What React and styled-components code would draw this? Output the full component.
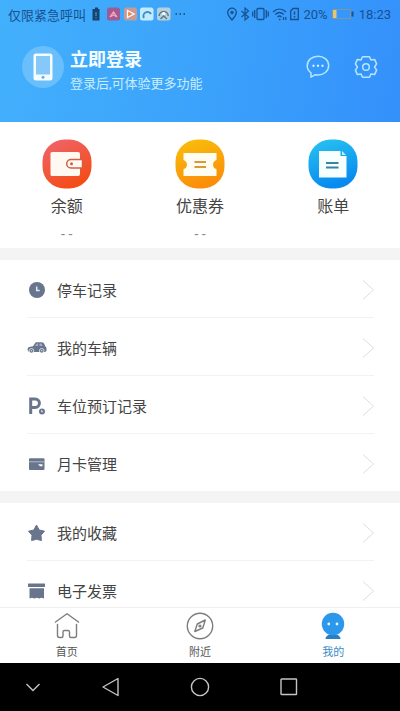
import { useState } from "react";
import styled, { createGlobalStyle } from "styled-components";

const records = [
    { id: "parking", title: "停车记录", icon: <ClockIcon /> },
    { id: "cars", title: "我的车辆", icon: <CarIcon /> },
    { id: "booking", title: "车位预订记录", icon: <ParkingIcon /> },
    { id: "card", title: "月卡管理", icon: <CardIcon /> }
];

const extras = [
    { id: "favorites", title: "我的收藏", icon: <StarIcon /> },
    { id: "invoice", title: "电子发票", icon: <InvoiceIcon /> }
];

const shortcuts = [
    { id: "balance", title: "余额", value: "- -", icon: <WalletIcon /> },
    { id: "coupon", title: "优惠券", value: "- -", icon: <CouponIcon /> },
    { id: "bill", title: "账单", value: "", icon: <BillIcon /> }
];

const tabs = [
    { id: "home", title: "首页", icon: <HomeIcon /> },
    { id: "nearby", title: "附近", icon: <CompassIcon /> },
    { id: "mine", title: "我的", icon: <MineIcon /> }
];

export default function App() {
    const [activeTab, setActiveTab] = useState("mine");

    return (
        <>
            <GlobalStyle />
            <Screen>
                <Header>
                    <StatusBar>
                        <StatusGroup $gap={5}>
                            仅限紧急呼叫
                            <StatusIconsLeft />
                        </StatusGroup>
                        <StatusGroup $gap={3}>
                            <StatusIconsRight />
                            20%
                            <BatteryIcon />
                            18:23
                        </StatusGroup>
                    </StatusBar>
                    <Profile>
                        <Login type="button">
                            <Avatar><PhoneIcon /></Avatar>
                            <LoginText>
                                <LoginTitle>立即登录</LoginTitle>
                                <LoginHint>登录后,可体验更多功能</LoginHint>
                            </LoginText>
                        </Login>
                        <Actions>
                            <IconButton type="button" aria-label="消息"><MessageIcon /></IconButton>
                            <IconButton type="button" aria-label="设置"><SettingsIcon /></IconButton>
                        </Actions>
                    </Profile>
                </Header>

                <Content>
                    <Shortcuts>
                        {shortcuts.map(({ id, title, value, icon }) => (
                            <Shortcut key={id} type="button">
                                {icon}
                                <ShortcutTitle>{title}</ShortcutTitle>
                                <ShortcutValue>{value}</ShortcutValue>
                            </Shortcut>
                        ))}
                    </Shortcuts>
                    <Menu items={records} />
                    <Menu items={extras} />
                </Content>

                <TabBar>
                    {tabs.map(({ id, title, icon }) => (
                        <Tab
                            key={id}
                            type="button"
                            $active={id === activeTab}
                            onClick={() => setActiveTab(id)}
                        >
                            {icon}
                            {title}
                        </Tab>
                    ))}
                </TabBar>

                <SystemBar>
                    <SystemButton type="button" aria-label="收起">
                        <svg width="24" height="24" fill="none" stroke="#c4c4c4" strokeWidth="1.4">
                            <path d="M5.5 9l6.5 6.500L18.500 9" />
                        </svg>
                    </SystemButton>
                    <SystemButton type="button" aria-label="返回">
                        <svg width="24" height="24" fill="none" stroke="#c4c4c4" strokeWidth="1.4" strokeLinejoin="round">
                            <path d="M19 3.500v17L4 12z" />
                        </svg>
                    </SystemButton>
                    <SystemButton type="button" aria-label="主屏幕">
                        <svg width="24" height="24" fill="none" stroke="#c4c4c4" strokeWidth="1.4">
                            <circle cx="12" cy="12" r="8.600" />
                        </svg>
                    </SystemButton>
                    <SystemButton type="button" aria-label="最近任务">
                        <svg width="24" height="24" fill="none" stroke="#c4c4c4" strokeWidth="1.4">
                            <rect x="4" y="4" width="15.500" height="15.500" rx=".6" />
                        </svg>
                    </SystemButton>
                    <span />
                </SystemBar>
            </Screen>
        </>
    );
}

function Menu({ items }) {
    return (
        <MenuList>
            {items.map(({ id, title, icon }) => (
                <MenuItem key={id}>
                    <MenuButton type="button">
                        {icon}
                        <MenuTitle>{title}</MenuTitle>
                        <svg width="12" height="22" fill="none" stroke="#dedede">
                            <path d="M1 1.500l10.500 9.500L1 20.500" />
                        </svg>
                    </MenuButton>
                </MenuItem>
            ))}
        </MenuList>
    );
}

function StatusIconsLeft() {
    return (
        <svg width="98" height="16" viewBox="0 0 98 16">
            <path d="M4 1.500h3V3h1.500v11.500h-7V3H4z" fill="#17446f" />
            <path d="M5 6v4M5 11.200v1.200" stroke="#4da6e8" />
            <rect x="16" y="1.500" width="13" height="13" rx="2.500" fill="#a05b93" />
            <path d="M19 11l3.500-5 3.500 5-3.500-2z" fill="none" stroke="#f3a5bd" strokeWidth="1.300" />
            <rect x="33" y="1.500" width="13" height="13" rx="2.500" fill="#c79a96" />
            <path d="M36.500 4.500l6.500 3.500-6.500 3.500z" fill="#e5864f" stroke="#fff" strokeWidth="1.300" />
            <rect x="49" y="1.500" width="13.500" height="13" rx="2.500" fill="#c3ebff" />
            <path d="M53 12a4 4 0 1 1 7-4" fill="none" stroke="#368fc4" strokeWidth="2" />
            <rect x="66" y="1.500" width="13.500" height="13" rx="2.500" fill="#b8cfdc" />
            <path d="M68.200 10a4.500 4.500 0 1 1 9 0M69.500 13l3.200-3 3.200 3" fill="none" stroke="#587b91" strokeWidth="1.500" />
            <circle cx="72.700" cy="7.500" r="1.500" fill="#fff" />
            <path d="M84.500 8H86M88.500 8H90M92.500 8H94" stroke="#17446f" strokeWidth="1.500" />
        </svg>
    );
}

function StatusIconsRight() {
    return (
        <svg width="74" height="16" viewBox="0 0 74 16" fill="none" stroke="#17518f" strokeWidth="1.300">
            <path d="M6 14C3.500 11 1.700 9 1.700 6.500a4.300 4.300 0 0 1 8.600 0C10.300 9 8.500 11 6 14z" />
            <circle cx="6" cy="6.500" r="1.100" />
            <path d="M15.500 5l7 6-3.500 3V2l3.500 3-7 6" strokeWidth="1.200" />
            <rect x="31" y="2.500" width="7" height="11" rx="1" />
            <path d="M28.700 4v8M26.700 5.500v5M40.300 4v8M42.300 5.500v5" />
            <path d="M47 6c4-3.800 9-3.800 13 0M49.300 8.500c2.600-2.500 5.800-2.500 8.400 0M51.500 11c1.200-1.200 2.800-1.200 4 0" />
            <path d="M53 13.500h1.500M57.500 11v3M59.800 11v3" />
            <path d="M64.700 5L67 2.500h5.300v11h-7.600z" />
            <path d="M68.500 5.500v3.200M68.500 10v1.500" strokeWidth="1.500" />
        </svg>
    );
}

function BatteryIcon() {
    return (
        <svg width="25" height="16" viewBox="0 0 25 16">
            <rect x="1.500" y="3.500" width="18" height="9" rx="1" fill="none" stroke="#7d97a0" strokeWidth="1.200" />
            <rect x="2" y="4" width="3.500" height="8" fill="#e8c571" />
            <rect x="20.500" y="5.500" width="2" height="5" fill="#17518f" />
        </svg>
    );
}

function PhoneIcon() {
    return (
        <svg width="20" height="28" viewBox="0 0 20 28">
            <rect x=".5" y=".5" width="19" height="27" rx="2.500" fill="#f4fcff" />
            <rect x="3" y="3" width="14" height="18.500" fill="#86c8f8" />
            <circle cx="10" cy="24.300" r="1.500" fill="#6caede" />
        </svg>
    );
}

function MessageIcon() {
    return (
        <svg width="24" height="24" viewBox="0 0 24 24" fill="none" stroke="#b5e6ff" strokeWidth="1.500">
            <path d="M5 17.800C2.500 16 1.200 13.500 1.200 10.700 1.200 5.200 6 1.200 12 1.200s10.700 4 10.700 9.300-4.700 9.500-10.700 9.500c-1 0-1.800-.1-2.600-.3L5 22.200z" strokeLinejoin="round" />
            <path d="M6.500 10.700h2M11 10.700h2M15.500 10.700h2" stroke="#e3f7ff" strokeWidth="2" />
        </svg>
    );
}

function SettingsIcon() {
    return (
        <svg width="24" height="24" viewBox="0 0 24 24" fill="none" stroke="#b5e6ff" strokeWidth="1.500" strokeLinejoin="round">
            <path d="M8.500 1.700h7l1.400 3.200 3.700-.5 2 4.500-2 3.100 2 3.100-2 4.500-3.700-.5-1.400 3.200h-7l-1.400-3.200-3.700.5-2-4.500 2-3.100-2-3.100 2-4.500 3.700.5z" />
            <circle cx="12" cy="12" r="3.300" />
        </svg>
    );
}

function WalletIcon() {
    return (
        <svg width="50" height="50" viewBox="0 0 50 50">
            <defs>
                <linearGradient id="wallet" x2=".5" y2="1">
                    <stop offset="0" stopColor="#ef6570" />
                    <stop offset="1" stopColor="#f44d18" />
                </linearGradient>
            </defs>
            <rect x=".5" y=".5" width="49" height="49" rx="22" fill="url(#wallet)" />
            <path d="M10 13h26q2 0 2 2v20q0 2-2 2H10q-1.500 0-1.500-1.500v-21Q8.500 13 10 13z" fill="#fff9f1" />
            <path d="M40.500 20.500H29a4.300 4.300 0 0 0 0 8.600h11.500z" fill="#fff9f1" stroke="#cf604a" strokeWidth="1.500" />
            <circle cx="29.500" cy="24.800" r="1.500" fill="#dc5643" />
        </svg>
    );
}

function CouponIcon() {
    return (
        <svg width="50" height="50" viewBox="0 0 50 50">
            <defs>
                <linearGradient id="coupon" x2=".3" y2="1">
                    <stop offset="0" stopColor="#f9c00a" />
                    <stop offset="1" stopColor="#fb8f0a" />
                </linearGradient>
            </defs>
            <rect x=".5" y=".5" width="49" height="49" rx="22" fill="url(#coupon)" />
            <path d="M8.500 14h33v7a4.800 4.800 0 0 0 0 9.200V37h-33v-6.800a4.800 4.800 0 0 0 0-9.200z" fill="#fffdf2" />
            <path d="M19.500 23h11.500M19.500 28h11.500" stroke="#d79a35" strokeWidth="1.800" />
        </svg>
    );
}

function BillIcon() {
    return (
        <svg width="50" height="50" viewBox="0 0 50 50">
            <defs>
                <linearGradient id="bill" x2=".3" y2="1">
                    <stop offset="0" stopColor="#29c4f1" />
                    <stop offset="1" stopColor="#078bef" />
                </linearGradient>
            </defs>
            <rect x=".5" y=".5" width="49" height="49" rx="22" fill="url(#bill)" />
            <path d="M11 12h21.500v5h6v21.500H11z" fill="#f7ffff" />
            <path d="M34 12l4 4h-4z" fill="#c3f0ff" />
            <path d="M18 24h12.500M18 28.500h12.500" stroke="#35869f" strokeWidth="2" />
        </svg>
    );
}

function ClockIcon() {
    return (
        <svg width="20" height="20" viewBox="0 0 20 20">
            <circle cx="10" cy="10" r="8" fill="#68758c" />
            <path d="M9.700 6.500v4h3" fill="none" stroke="#dfeaf8" strokeWidth="1.500" />
        </svg>
    );
}

function CarIcon() {
    return (
        <svg width="20" height="20" viewBox="0 0 20 20">
            <path d="M.5 12q0-2.500 1.500-3l4-.8 2-3Q8.500 4.200 9.500 4.200h5.500q1.500 0 2.200 1.500l1 2.500q1.300.8 1.300 2.500v2.300L18 14H2z" fill="#68758c" />
            <path d="M8 8l1.800-2.500H11V8zM12.500 5.500h2L15.700 8h-3.200z" fill="#a3adbd" />
            <circle cx="4.500" cy="12.800" r="2.300" fill="#68758c" stroke="#fff" strokeWidth=".7" />
            <circle cx="14.700" cy="12.800" r="2.300" fill="#68758c" stroke="#fff" strokeWidth=".7" />
            <circle cx="4.500" cy="12.800" r=".8" fill="#d5dae2" />
            <circle cx="14.700" cy="12.800" r=".8" fill="#d5dae2" />
        </svg>
    );
}

function ParkingIcon() {
    return (
        <svg width="20" height="20" viewBox="0 0 20 20" fill="none" stroke="#68758c">
            <path d="M3.700 18V3h4.500a4.200 4.200 0 0 1 0 8.400H4" strokeWidth="3" />
            <circle cx="15" cy="15.500" r="3" fill="#68758c" stroke="none" />
            <path d="M14.700 14v1.800h1.500" stroke="#fff" strokeWidth=".8" />
        </svg>
    );
}

function CardIcon() {
    return (
        <svg width="20" height="20" viewBox="0 0 20 20">
            <rect x="2" y="4.200" width="15.500" height="11.800" rx="1" fill="#68758c" />
            <path d="M2 7.800h15.500" stroke="#b4bbc8" />
            <path d="M11 10.300h4.500v2H13z" fill="#fff" />
        </svg>
    );
}

function StarIcon() {
    return (
        <svg width="20" height="20" viewBox="0 0 20 20">
            <path d="M9.500 2l2.700 5 5.300 1.200-3.500 4 .4 5.300-4.900-1.200-4.900 1.200.4-5.300-3.500-4L6.800 7z" fill="#68758c" stroke="#68758c" strokeLinejoin="round" />
        </svg>
    );
}

function InvoiceIcon() {
    return (
        <svg width="20" height="20" viewBox="0 0 20 20" fill="#68758c">
            <rect x="1" y="2.500" width="17" height="3.500" rx=".5" />
            <path d="M2.500 7.200H17v10.300l-2.400-.8-2.400.8-2.400-.8-2.400.8-2.400-.8-2.500.8z" />
        </svg>
    );
}

function HomeIcon() {
    return (
        <svg width="28" height="28" viewBox="0 0 28 28" fill="none" stroke="#7d7d7d" strokeWidth="1.400" strokeLinecap="round" strokeLinejoin="round">
            <path d="M2.500 10L14 1.800 25.500 10" />
            <path d="M4.500 12.500v11q0 2 2 2h2q1.500 0 1.500-1.500v-4q0-1.500 1.500-1.500H15q1.500 0 1.500 1.500v4q0 1.500 1.500 1.500h3.500q2 0 2-2v-11" />
        </svg>
    );
}

function CompassIcon() {
    return (
        <svg width="28" height="28" viewBox="0 0 28 28" fill="none" stroke="#7d7d7d" strokeWidth="1.400" strokeLinejoin="round">
            <circle cx="14" cy="14" r="12.700" />
            <path d="M8.800 19.500l2.500-7.500 8-4-2.500 8z" />
            <circle cx="14" cy="14" r=".9" />
        </svg>
    );
}

function MineIcon() {
    return (
        <svg width="28" height="28" viewBox="0 0 28 28">
            <path d="M6.500 27q0-3 4-4.500h7q4 1.500 4 4.500z" fill="#277fc6" />
            <circle cx="14" cy="12" r="11.200" fill="#2b98ec" />
            <circle cx="9.800" cy="12" r="1.400" fill="#e3f8ff" />
            <circle cx="18" cy="12" r="1.400" fill="#e3f8ff" />
        </svg>
    );
}

const GlobalStyle = createGlobalStyle`
    * {
        box-sizing: border-box;
    }

    body {
        margin: 0;
        font-family: Roboto, "Noto Sans CJK SC", sans-serif;
        color: #444;
    }

    button {
        border: none;
        padding: 0;
        background: none;
        font: inherit;
        color: inherit;
        cursor: pointer;
    }

    svg {
        display: block;
        flex: none;
    }
`;

const Screen = styled.div`
    display: flex;
    flex-direction: column;
    height: 100vh;
    background-color: #f4f4f4;
`;

const Header = styled.header`
    flex: none;
    padding-bottom: 27px;
    background: linear-gradient(100deg, #43b0fc 0%, #3ba3fb 50%, #3490fb 100%);
`;

const StatusBar = styled.div`
    display: flex;
    justify-content: space-between;
    align-items: center;
    height: 28px;
    padding: 0 9px 0 8px;
    font-size: 13px;
    color: #17518f;
`;

const StatusGroup = styled.div`
    display: flex;
    align-items: center;
    gap: ${({ $gap }) => $gap}px;
`;

const Profile = styled.div`
    display: flex;
    justify-content: space-between;
    align-items: center;
    padding: 11px 22px 0;
`;

const Login = styled.button`
    display: flex;
    align-items: center;
    gap: 6px;
    text-align: left;
`;

const Avatar = styled.span`
    display: flex;
    justify-content: center;
    align-items: center;
    width: 42px;
    height: 42px;
    border-radius: 50%;
    background-color: #68bffc;
`;

const LoginText = styled.span`
    padding-top: 8px;
`;

const LoginTitle = styled.strong`
    display: block;
    font-size: 18px;
    line-height: 26px;
    color: #f5fdff;
`;

const LoginHint = styled.span`
    display: block;
    font-size: 13px;
    line-height: 22px;
    color: #c9ecff;
`;

const Actions = styled.div`
    display: flex;
    gap: 24px;
`;

const IconButton = styled.button`
    width: 24px;
    height: 24px;
`;

const Content = styled.main`
    flex: 1;
    min-height: 0;
    overflow: hidden;
`;

const Shortcuts = styled.section`
    display: grid;
    grid-template-columns: repeat(3, 1fr);
    padding: 17px 0 4px;
    background-color: #fff;
`;

const Shortcut = styled.button`
    display: flex;
    flex-direction: column;
    align-items: center;
`;

const ShortcutTitle = styled.span`
    margin-top: 6px;
    font-size: 16px;
    line-height: 24px;
`;

const ShortcutValue = styled.span`
    height: 25px;
    font-size: 14px;
    line-height: 30px;
    color: #888;
`;

const MenuList = styled.ul`
    margin: 12px 0 0;
    padding: 0 26px 0 27px;
    list-style: none;
    background-color: #fff;
`;

const MenuItem = styled.li`
    border-bottom: 1px solid #f2f2f2;

    &:last-child {
        border-bottom: none;
    }
`;

const MenuButton = styled.button`
    display: flex;
    align-items: center;
    gap: 10px;
    width: 100%;
    height: 57px;
    padding-top: 2px;
    text-align: left;
`;

const MenuTitle = styled.span`
    flex: 1;
    font-size: 15px;
`;

const TabBar = styled.nav`
    flex: none;
    display: grid;
    grid-template-columns: repeat(3, 1fr);
    border-top: 1px solid #f0f0f0;
    background-color: #fff;
`;

const Tab = styled.button`
    display: flex;
    flex-direction: column;
    align-items: center;
    gap: 5px;
    padding: 4px 0 2px;
    font-size: 11px;
    line-height: 16px;
    color: ${({ $active }) => ($active ? "#3a8cc8" : "#555")};
`;

const SystemBar = styled.footer`
    flex: none;
    display: grid;
    grid-template-columns: 66px repeat(3, 89px) 1fr;
    height: 48px;
    background-color: #000;
`;

const SystemButton = styled.button`
    display: flex;
    justify-content: center;
    align-items: center;
`;
